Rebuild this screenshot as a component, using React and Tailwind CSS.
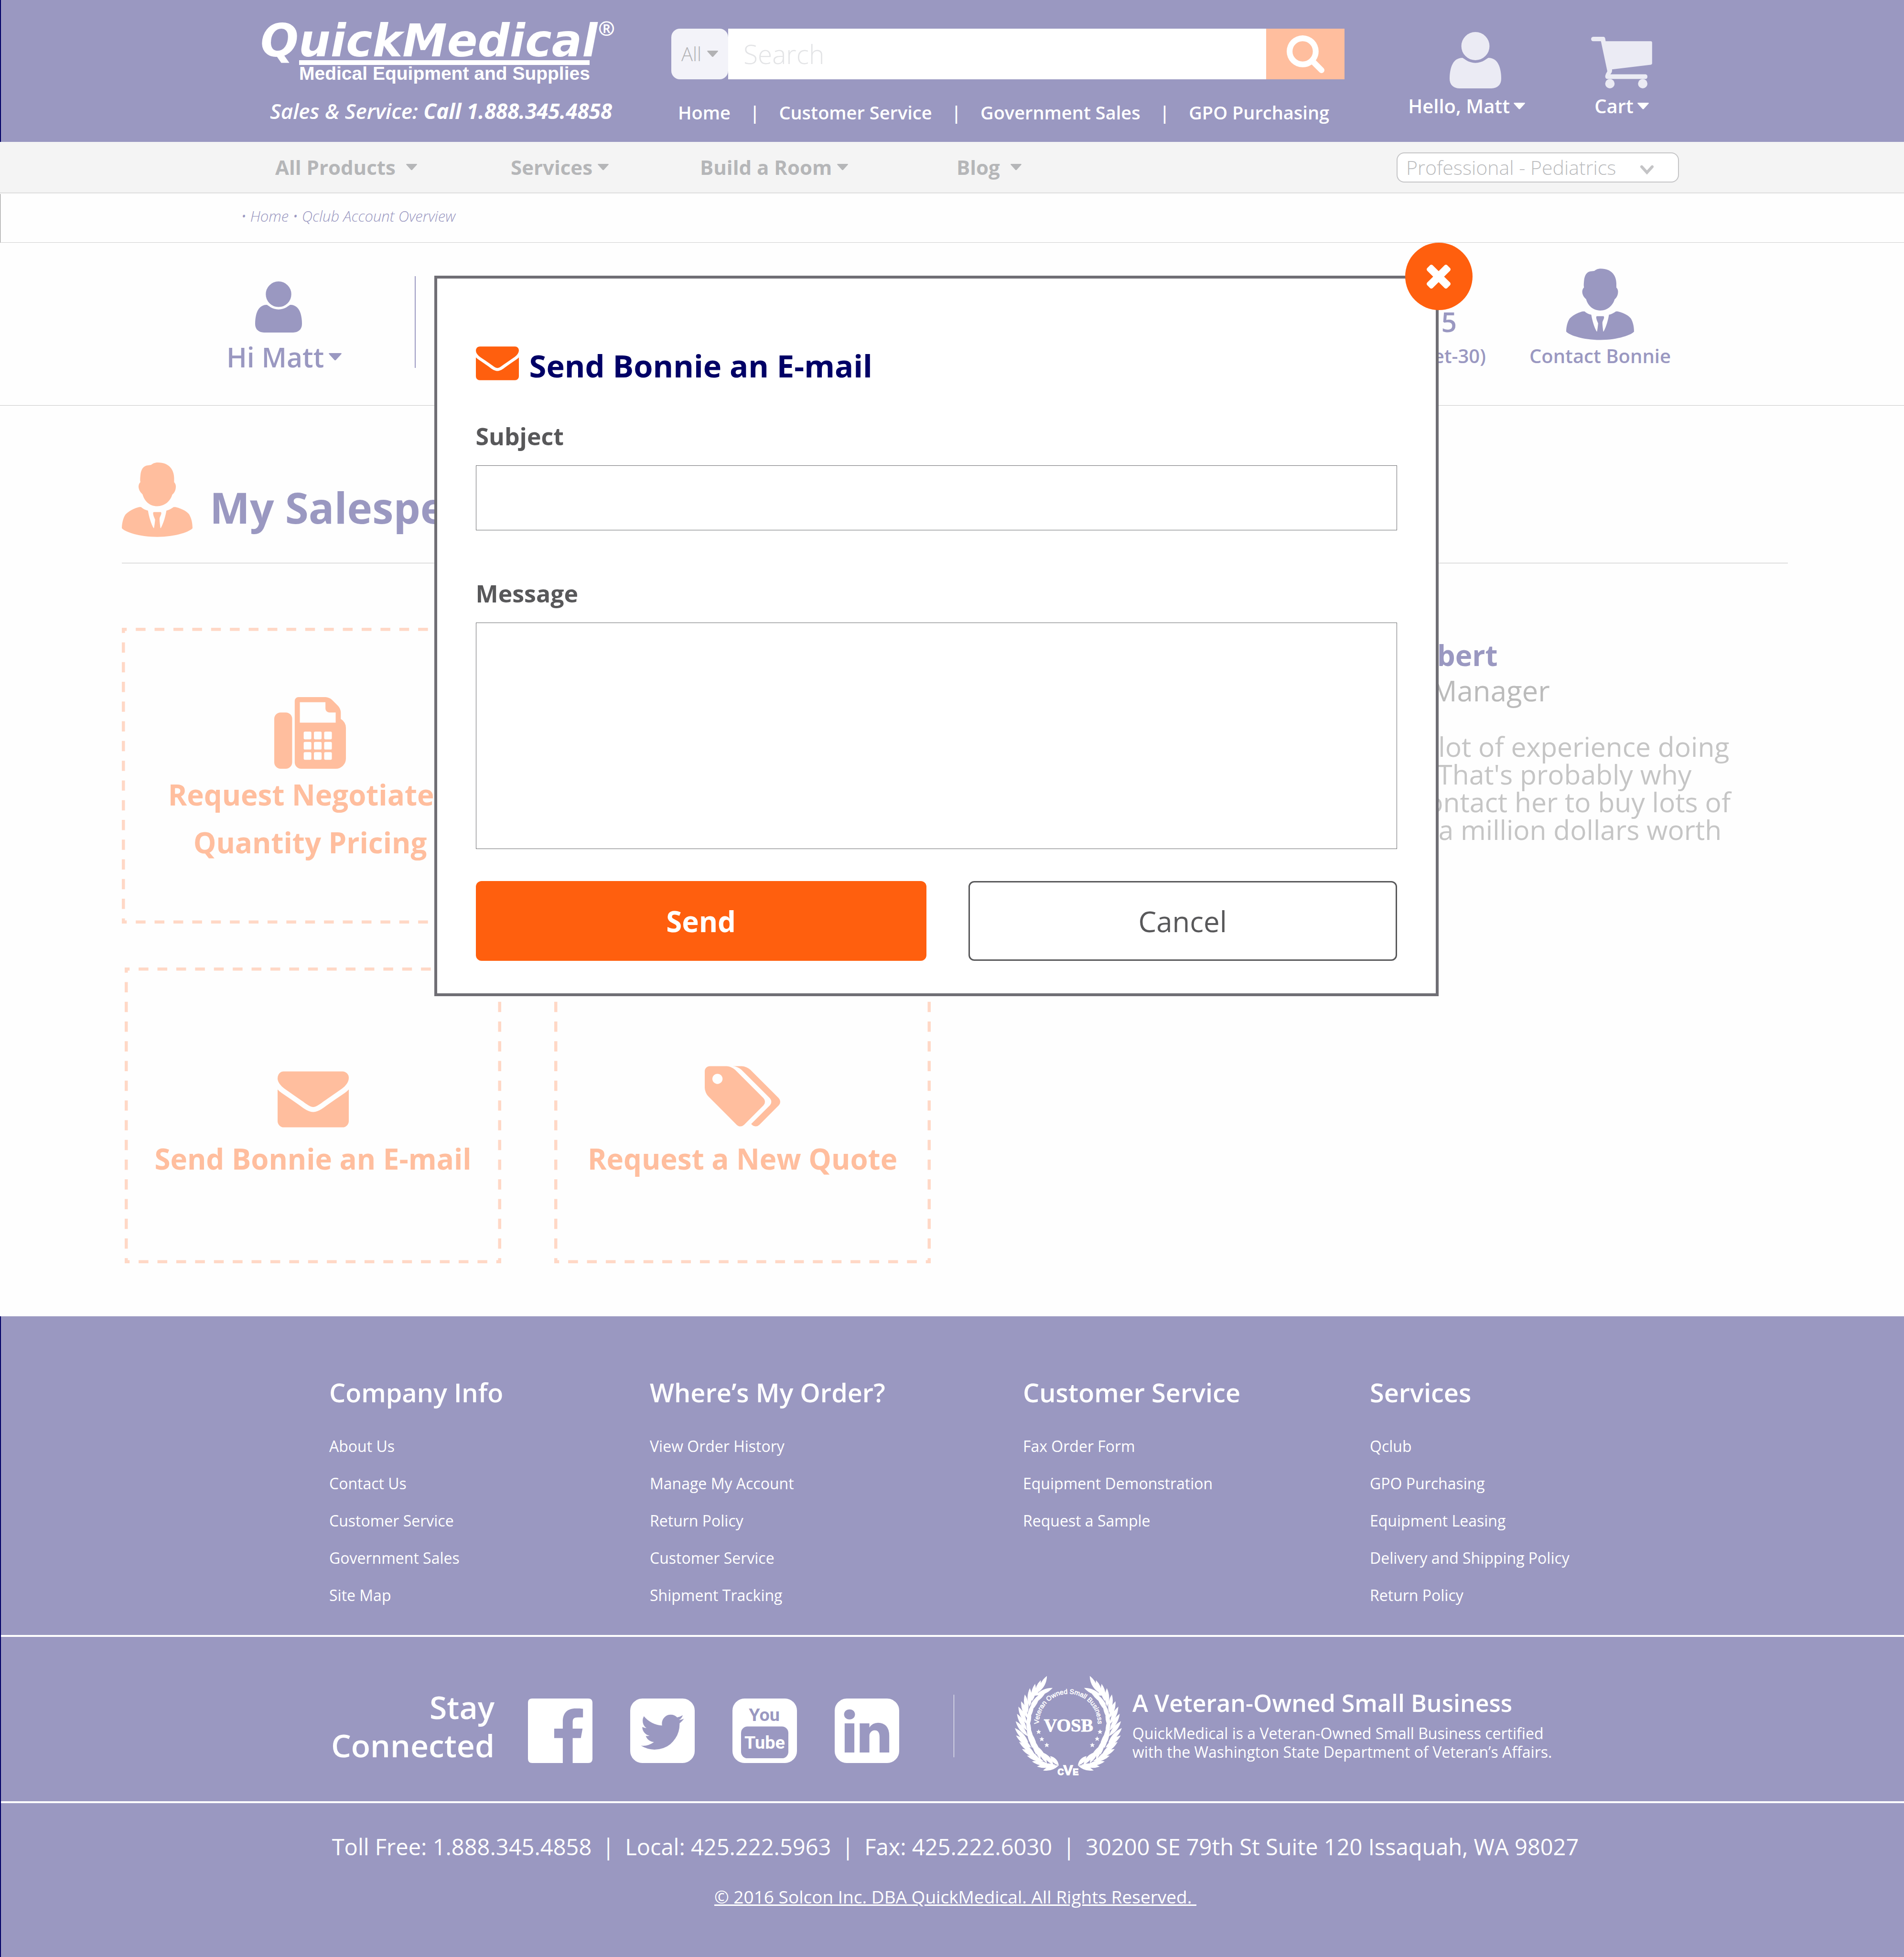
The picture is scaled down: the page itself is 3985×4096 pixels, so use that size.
import React from "react";

const PATHS = {
  search:
    "M1152 832q0-185-131.5-316.5t-316.5-131.5-316.5 131.5-131.5 316.5 131.5 316.5 316.5 131.5 316.5-131.5 131.5-316.5zm512 832q0 52-38 90t-90 38q-54 0-90-38l-343-342q-179 124-399 124-143 0-273.5-55.5t-225-150-150-225-55.5-273.5 55.5-273.5 150-225 225-150 273.5-55.5 273.5 55.5 225 150 150 225 55.5 273.5q0 220-124 399l343 343q37 37 37 90z",
  user:
    "M1600 1405q0 120-73 189.5t-194 69.5h-874q-121 0-194-69.5t-73-189.5q0-53 3.5-103.5t14-109 26.5-108.5 43-97.5 62-81 85.5-53.5 111.5-20q9 0 42 21.5t74.5 48 108 48 133.5 21.5 133.5-21.5 108-48 74.5-48 42-21.5q61 0 111.5 20t85.5 53.5 62 81 43 97.5 26.5 108.5 14 109 3.5 103.5zm-320-893q0 159-112.5 271.5t-271.5 112.5-271.5-112.5-112.5-271.5 112.5-271.5 271.5-112.5 271.5 112.5 112.5 271.5z",
  envelope:
    "M1792 710v794q0 66-47 113t-113 47h-1472q-66 0-113-47t-47-113v-794q44 49 101 87 362 246 497 345 57 42 92.5 65.5t94.5 48 110 24.5h2q51 0 110-24.5t94.5-48 92.5-65.5q170-123 498-345 57-39 100-87zm0-294q0 79-49 151t-122 123q-376 261-468 325-10 7-42.5 31t-54 38.5-52 32.5-57.5 27-50 9h-2q-23 0-50-9t-57.5-27-52-32.5-54-38.5-42.5-31q-91-64-262-182.5t-205-142.5q-62-42-117-115.5t-55-136.5q0-78 41.5-130t118.5-52h1472q65 0 112.5 47t47.500 113z",
  times:
    "M1490 1322q0 40-28 68l-136 136q-28 28-68 28t-68-28l-294-294-294 294q-28 28-68 28t-68-28l-136-136q-28-28-28-68t28-68l294-294-294-294q-28-28-28-68t28-68l136-136q28-28 68-28t68 28l294 294 294-294q28-28 68-28t68 28l136 136q28 28 28 68t-28 68l-294 294 294 294q28 28 28 68z",
  tags:
    "M448 448q0-53-37.5-90.5t-90.5-37.5-90.5 37.5-37.5 90.5 37.5 90.5 90.5 37.5 90.5-37.5 37.5-90.5zm1067 576q0 53-37 90l-491 492q-39 37-91 37-53 0-90-37l-715-716q-38-37-64.5-101t-26.5-117v-416q0-52 38-90t90-38h416q53 0 117 26.5t102 64.5l715 714q37 39 37 91zm384 0q0 53-37 90l-491 492q-39 37-91 37-36 0-59-14t-53-45l470-470q37-37 37-90 0-52-37-91l-715-714q-38-38-102-64.5t-117-26.5h224q53 0 117 26.5t102 64.5l715 714q37 39 37 91z",
  twitter:
    "M1408 610q-56 25-121 34 68-40 93-117-65 38-134 51-61-66-153-66-87 0-148.5 61.5t-61.5 148.5q0 29 5 48-129-7-242-65t-192-155q-29 50-29 106 0 114 91 175-47-1-100-26v2q0 75 50 133.5t123 72.5q-29 8-51 8-13 0-39-4 21 63 74.5 104t121.5 42q-116 90-261 90-26 0-50-3 148 94 322 94 112 0 210-35.5t168-95 120.5-137 75-162 24.5-168.5q0-18-1-27 63-45 105-109zm256-194v960q0 119-84.5 203.5t-203.5 84.5h-960q-119 0-203.5-84.5t-84.5-203.5v-960q0-119 84.5-203.5t203.5-84.5h960q119 0 203.5 84.5t84.5 203.5z",
  linkedin:
    "M365 1414h231v-694h-231v694zm246-908q-1-52-36-86t-93-34-94.5 34-36.5 86q0 51 35.5 85.5t92.5 34.5h1q59 0 95-34.5t36-85.5zm585 908h231v-398q0-154-73-233t-193-79q-136 0-209 117h2v-101h-231q3 66 0 694h231v-388q0-38 7-56 15-35 45-59.5t74-24.5q116 0 116 157v371zm468-998v960q0 119-84.5 203.5t-203.5 84.5h-960q-119 0-203.5-84.5t-84.5-203.5v-960q0-119 84.5-203.5t203.5-84.5h960q119 0 203.5 84.5t84.5 203.5z",
};

function Glyph({ d, box, className }) {
  return (
    <svg viewBox={box} className={className} fill="currentColor" aria-hidden="true">
      <path d={d} fillRule="evenodd" />
    </svg>
  );
}

const UserIcon = ({ className }) => <Glyph d={PATHS.user} box="192 128 1408 1536" className={className} />;
const EnvelopeIcon = ({ className }) => <Glyph d={PATHS.envelope} box="0 256 1792 1408" className={className} />;
const TagsIcon = ({ className }) => <Glyph d={PATHS.tags} box="0 128 1899 1516" className={className} />;

function Caret({ className = "w-6" }) {
  return (
    <svg viewBox="0 0 26 15" className={`shrink-0 ${className}`} fill="currentColor" aria-hidden="true">
      <path d="M1.5 0h23q2 0 1 2L14.500 14q-1.500 1.500-3 0L.5 2Q-.5 0 1.500 0z" />
    </svg>
  );
}

const FAX_KEYS = [864, 1120, 1376]
  .flatMap((y) =>
    [736, 992, 1248].map(
      (x) =>
        `M${x + 32} ${y}h128q32 0 32 32v128q0 32-32 32h-128q-32 0-32-32v-128q0-32 32-32z`
    )
  )
  .join("");

function FaxIcon({ className }) {
  return (
    <Glyph
      box="0 0 1792 1792"
      className={className}
      d={
        "M288 384q66 0 113 47t47 113v1088q0 66-47 113t-113 47h-128q-66 0-113-47t-47-113v-1088q0-66 47-113t113-47h128zM1664 547q58 34 93 93t35 128v768q0 106-75 181t-181 75h-864q-66 0-113-47t-47-113v-1536q0-40 28-68t68-28h672q40 0 88 20t76 48l152 152q28 28 48 76t20 88v163zM1536 640V384h-160q-40 0-68-28t-28-68V128H640v512z" +
        FAX_KEYS
      }
    />
  );
}

function CartIcon({ className }) {
  return (
    <svg viewBox="0 0 143 121" className={className} fill="currentColor" aria-hidden="true">
      <path d="M5 0H29Q32 0 33 4L34 10.500H140Q143 10.500 143 14V62Q143 65 140 65.500L49 76.500Q50 83 45 88H128Q132 89 132 93.500T128 99H39Q33 99 33 93Q33 89 38 81L23 10.500H5Q0 10 0 5.300T5 0z" />
      <circle cx="44" cy="110" r="11" />
      <circle cx="121" cy="110" r="11" />
    </svg>
  );
}

function SalespersonIcon({ className }) {
  return (
    <svg viewBox="0 0 495 522" className={className} fill="currentColor" aria-hidden="true">
      <path d="M205 17C215 8 230 0 252 0C330 0 366 50 366 110V138C376 148 379 160 378 172C377 195 368 212 353 225C340 270 300 306 248 306C195 306 158 270 145 223C128 208 118 190 117 170C117 158 121 145 130 137C126 122 129 105 130 90C134 46 152 22 183 20Z" />
      <path d="M134 312C148 324 165 333 183 337C190 380 205 430 222 459H225C229 440 231 420 233 400C228 388 220 372 219 358Q219 347 224 347H272Q277 348 276 360C273 372 265 382 264 394C264 415 268 440 270 459H273C292 425 306 375 312 337C330 333 348 322 363 312H375C430 325 462 348 473 366C488 395 494 420 495 460C480 482 380 521 248 521C120 521 20 485 0 460C0 430 8 390 25 365C45 342 90 318 122 312Z" />
    </svg>
  );
}

function FacebookIcon({ className }) {
  return (
    <Glyph
      box="0 0 150 150"
      className={className}
      d="M10 0H140Q150 0 150 10V140Q150 150 140 150H104V92H123L127 70H104V55C104 47 107 44 116 44H128V24C124 23 118 23 111 23C92 23 81 33 81 54V70H61V92H81V150H10Q0 150 0 140V10Q0 0 10 0Z"
    />
  );
}

function YoutubeIcon({ className }) {
  return (
    <svg viewBox="0 0 150 150" className={className} aria-hidden="true">
      <rect width="150" height="150" rx="28" fill="white" />
      <rect x="20" y="65" width="110" height="74" rx="15" fill="#9a98c1" />
      <g textAnchor="middle" fontSize="42" fontWeight="700" fontFamily="Roboto, 'Liberation Sans', sans-serif">
        <text x="74" y="52" fill="#9a98c1">You</text>
        <text x="75" y="117" fill="white">Tube</text>
      </g>
    </svg>
  );
}

/* Each leaf: tip x, tip y, base x, base y (left half of the wreath) */
const LEAVES = [
  [258, 730, 368, 695], [215, 703, 345, 690], [180, 667, 300, 690], [145, 627, 262, 665],
  [110, 580, 225, 640], [90, 530, 195, 610], [68, 485, 175, 570], [60, 433, 155, 535],
  [66, 385, 150, 490], [75, 333, 145, 450], [85, 283, 143, 405], [105, 245, 148, 365],
  [130, 198, 150, 325], [165, 153, 163, 285], [202, 123, 180, 245], [241, 98, 203, 210],
  [285, 68, 228, 180], [308, 630, 368, 695], [258, 605, 330, 690], [220, 563, 285, 680],
  [195, 520, 240, 655], [183, 478, 210, 620], [163, 425, 183, 575], [157, 370, 162, 530],
  [170, 315, 145, 440], [192, 258, 145, 385], [235, 210, 150, 330], [280, 175, 170, 270],
  [325, 152, 205, 205],
];

function leafPath([tx, ty, bx, by]) {
  const dx = tx - bx;
  const dy = ty - by;
  const len = Math.hypot(dx, dy);
  const nx = (-dy / len) * 30;
  const ny = (dx / len) * 30;
  const mx = (tx + bx) / 2;
  const my = (ty + by) / 2;
  return `M${bx} ${by}Q${mx + nx} ${my + ny} ${tx} ${ty}Q${mx - nx} ${my - ny} ${bx} ${by}Z`;
}

const WREATH = LEAVES.map(leafPath).join("");
const STARS = [[227, 460], [249, 511], [284, 553], [657, 460], [637, 509], [603, 553]];

function VosbSeal({ className }) {
  return (
    <svg viewBox="60 66 750 702" className={`overflow-visible ${className}`} fill="white" role="img" aria-label="VOSB seal">
      <path d={WREATH} />
      <path d={WREATH} transform="matrix(-1 0 0 1 870 0)" />
      <defs>
        <path id="seal-arc" d="M231 428A206 206 0 1 1 639 428" />
      </defs>
      <text fontSize="47" fontFamily="'Liberation Sans', Arial, sans-serif" stroke="white" strokeWidth="2">
        <textPath href="#seal-arc" startOffset="50%" textAnchor="middle">
          Veteran Owned Small Business
        </textPath>
      </text>
      <text x="436" y="458" textAnchor="middle" fontSize="128" fontWeight="700" fontFamily="'Liberation Serif', serif" stroke="white" strokeWidth="3">
        VOSB
      </text>
      {STARS.map(([x, y]) => (
        <path
          key={`${x}-${y}`}
          transform={`translate(${x} ${y})`}
          d="M0-18L5-6L17-6L8 2L12 15L0 8L-12 15L-8 2L-17-6L-5-6Z"
        />
      ))}
      <g fontFamily="'Liberation Sans', Arial, sans-serif" fontWeight="700" stroke="white" strokeWidth="5">
        <text x="381" y="763" textAnchor="middle" fontSize="60">C</text>
        <text x="433" y="763" textAnchor="middle" fontSize="100">V</text>
        <text x="486" y="763" textAnchor="middle" fontSize="60">E</text>
      </g>
    </svg>
  );
}

/* Dashed outline whose dashes meet in full corners */
function DashedFrame() {
  const across = { pathLength: 20, strokeDasharray: "0.520 0.480", strokeDashoffset: 0.26 };
  const down = { pathLength: 15, strokeDasharray: "0.520 0.480", strokeDashoffset: 0.26 };
  return (
    <svg className="absolute inset-0 h-full w-full" stroke="#ffd8c6" strokeWidth="13" aria-hidden="true">
      <line x1="0" y1="0" x2="100%" y2="0" {...across} />
      <line x1="0" y1="100%" x2="100%" y2="100%" {...across} />
      <line x1="0" y1="0" x2="0" y2="100%" {...down} />
      <line x1="100%" y1="0" x2="100%" y2="100%" {...down} />
    </svg>
  );
}

function ActionCard({ icon, iconBox, children }) {
  return (
    <a href="#" className="relative flex h-[619px] w-[788px] flex-col items-center text-center text-[60px] leading-[100px] font-bold text-[#ffbe9e]">
      <DashedFrame />
      <span className={iconBox}>{icon}</span>
      <span>{children}</span>
    </a>
  );
}

const TOP_LINKS = ["Home", "Customer Service", "Government Sales", "GPO Purchasing"];

function Header() {
  return (
    <header className="flex h-[297px] items-start border-l-2 border-[#000066] bg-[#9a98c1] pr-[527px] pl-[543px] text-white">
      <div className="w-[742px] shrink-0 pt-9">
        <a href="#" className="block whitespace-nowrap">
          <span className="flex h-[90px] items-start justify-between">
            <span className="font-['DejaVu_Sans',sans-serif] text-[94px] leading-[100px] font-bold italic">QuickMedical</span>
            <span className="text-[42px] leading-[46px] font-bold">®</span>
          </span>
          <span className="ml-[81px] block h-[10px] w-[608px] bg-white" />
          <span className="ml-[81px] block font-['Liberation_Sans',Arial,sans-serif] text-[39px] leading-9 font-bold">
            Medical Equipment and Supplies
          </span>
        </a>
        <p className="mt-[30px] ml-5 text-[44px] leading-[60px] font-semibold whitespace-nowrap italic">
          Sales &amp; Service: <span className="font-bold">Call 1.888.345.4858</span>
        </p>
      </div>

      <div className="ml-[118px] flex-1 pt-[60px]">
        <form className="flex h-[106px]">
          <button type="button" className="flex w-[119px] items-center justify-center gap-3 rounded-[18px] bg-[#f3f3f9] text-[40px] font-light text-[#b2b2b4]">
            All <Caret className="w-[23px]" />
          </button>
          <input
            type="search"
            aria-label="Search"
            placeholder="Search"
            className="min-w-0 flex-1 bg-white px-8 text-[55px] font-light text-[#58585a] placeholder:text-[#e3e4e6]"
          />
          <button type="button" aria-label="Search" className="flex w-[164px] items-center justify-center bg-[#ffbe9e]">
            <Glyph d={PATHS.search} box="0 128 1664 1664" className="h-[79px] w-[79px]" />
          </button>
        </form>
        <nav className="mt-[39px] flex items-center justify-between pr-8 pl-[14px] text-[38px] leading-[60px] font-semibold whitespace-nowrap">
          {TOP_LINKS.map((label, i) => (
            <React.Fragment key={label}>
              {i > 0 && <span>|</span>}
              <a href="#">{label}</a>
            </React.Fragment>
          ))}
        </nav>
      </div>

      <div className="ml-[133px] flex gap-[138px] pt-[67px] text-[40px] leading-[50px] font-semibold whitespace-nowrap">
        <a href="#" className="flex flex-col items-center">
          <UserIcon className="ml-9 h-[118px] w-[108px] text-[#ebebf4]" />
          <span className="mt-3 flex items-center gap-2">Hello, Matt <Caret /></span>
        </a>
        <a href="#" className="flex flex-col items-center pt-[10px]">
          <CartIcon className="h-[108px] w-[128px] text-[#ebebf4]" />
          <span className="mt-3 flex items-center gap-2">Cart <Caret /></span>
        </a>
      </div>
    </header>
  );
}

function MainNav() {
  const item = "flex items-center";
  return (
    <div className="border-b-2 border-[#f4f4f4]">
      <nav className="grid h-[107px] grid-cols-[493fr_396fr_537fr_921fr_591fr] items-center border-b border-[#d0d0d0] bg-[#f4f4f4] pr-[471px] pl-[576px] text-[42px] leading-[60px] font-bold whitespace-nowrap text-[#b5b6b8]">
        <a href="#" className={`${item} gap-[22px]`}>All Products <Caret className="w-[23px]" /></a>
        <a href="#" className={`${item} gap-[11px]`}>Services <Caret className="w-[23px]" /></a>
        <a href="#" className={`${item} gap-[11px]`}>Build a Room <Caret className="w-[23px]" /></a>
        <a href="#" className={`${item} gap-[22px]`}>Blog <Caret className="w-[23px]" /></a>
        <div className="relative">
          <select
            aria-label="Shop profile"
            className="h-[63px] w-full appearance-none rounded-[16px] border-2 border-[#c4c4c6] bg-white pl-[18px] text-[41px] leading-[56px] font-light text-[#bbbcbe]"
          >
            <option>Professional - Pediatrics</option>
          </select>
          <svg viewBox="0 0 28 20" className="pointer-events-none absolute top-[27px] right-[53px] w-7" fill="none" stroke="#c4c4c6" strokeWidth="6" aria-hidden="true">
            <path d="M3 3L14 15L25 3" strokeLinecap="round" />
          </svg>
        </div>
      </nav>
    </div>
  );
}

function AccountBar() {
  return (
    <section className="flex h-[341px] items-end border-b border-[#c8c8c8] pr-[488px] pb-[78px] pl-[474px] font-semibold whitespace-nowrap text-[#9a98c1]">
      <a href="#" className="flex flex-col items-center">
        <UserIcon className="mr-6 h-[107px] w-[98px]" />
        <span className="mt-7 flex items-center gap-[10px] text-[57px] leading-[46px]">
          Hi Matt <Caret className="w-[27px]" />
        </span>
      </a>
      <span className="ml-[153px] h-[192px] w-[2px] bg-[#9a98c1]" />
      <div className="mr-[91px] ml-auto flex flex-col items-center gap-3">
        <span className="text-[57px] leading-[70px]">5</span>
        <span className="text-[40px] leading-[50px]">(Net-30)</span>
      </div>
      <a href="#" className="flex flex-col items-center">
        <SalespersonIcon className="h-[150px] w-[142px]" />
        <span className="mt-2 text-[40px] leading-[50px]">Contact Bonnie</span>
      </a>
    </section>
  );
}

function Salesperson() {
  return (
    <main className="pt-[119px] pr-[243px] pb-[111px] pl-[255px]">
      <div className="flex items-end gap-9 border-b border-[#c0c0c0] pb-[54px]">
        <SalespersonIcon className="h-[156px] w-[148px] text-[#ffbe9e]" />
        <h1 className="pb-3 text-[89px] leading-[100px] font-bold text-[#9a98c1]">My Salesperson</h1>
      </div>
      <div className="mt-[135px] flex items-start justify-between">
        <div>
          <ActionCard iconBox="mt-[145px] mb-1" icon={<FaxIcon className="h-[150px] w-[150px]" />}>
            Request Negotiated
            <br />
            Quantity Pricing
          </ActionCard>
          <div className="mt-[92px] ml-[6px] flex gap-[111px]">
            <ActionCard iconBox="flex h-[350px] items-end pb-[15px]" icon={<EnvelopeIcon className="h-[118px] w-[149px]" />}>
              Send Bonnie an E-mail
            </ActionCard>
            <ActionCard iconBox="flex h-[350px] items-end pb-[17px]" icon={<TagsIcon className="h-[127px] w-[158px]" />}>
              Request a New Quote
            </ActionCard>
          </div>
        </div>
        <aside className="w-[1089px] pt-[21px] whitespace-nowrap">
          <h2 className="text-[60px] leading-[72px] font-bold text-[#9a98c1]">Bonnie Lambert</h2>
          <p className="text-[60px] leading-[76px] text-[#bbbbbb]">Inside Sales Manager</p>
          <p className="mt-[50px] text-[57px] leading-[58px] text-[#c5c5c5]">
            Bonnie has a lot of experience doing
            <br />
            many things. That's probably why
            <br />
            people can contact her to buy lots of
            <br />
            stuff, at least a million dollars worth
          </p>
        </aside>
      </div>
    </main>
  );
}

function EmailDialog() {
  const label = "block text-[50px] leading-[60px] font-bold";
  const field = "block w-full resize-none border border-[#6d6e71] bg-white px-6 text-[50px]";
  return (
    <div
      role="dialog"
      aria-labelledby="dialog-title"
      className="absolute top-[577px] right-[24.45%] left-[22.8%] border-6 border-[#6f6e74] bg-white px-[81px] pt-[142px] pb-[68px] text-[#58585a]"
    >
      <button
        type="button"
        aria-label="Close"
        className="absolute -top-[75px] -right-[77px] flex h-[141px] w-[141px] items-center justify-center rounded-full bg-[#ff5f0e] text-white"
      >
        <Glyph d={PATHS.times} box="302 366 1188 1188" className="h-[50px] w-[50px]" />
      </button>
      <div className="flex items-start gap-[22px]">
        <EnvelopeIcon className="h-[71px] w-[90px] text-[#ff5f0e]" />
        <h2 id="dialog-title" className="text-[65px] leading-[80px] font-bold text-[#000066]">Send Bonnie an E-mail</h2>
      </div>
      <form>
        <label htmlFor="subject" className={`mt-[78px] ${label}`}>Subject</label>
        <input id="subject" type="text" className={`mt-[31px] h-[136px] ${field}`} />
        <label htmlFor="message" className={`mt-[102px] ${label}`}>Message</label>
        <textarea id="message" className={`mt-[31px] h-[474px] ${field}`} />
        <div className="mt-[67px] grid grid-cols-[943fr_897fr] gap-[88px] text-[60px] leading-[80px]">
          <button type="button" className="h-[167px] rounded-[12px] bg-[#ff5f0e] font-bold text-white">Send</button>
          <button type="button" className="h-[167px] rounded-[12px] border-3 border-[#58585a] bg-white">Cancel</button>
        </div>
      </form>
    </div>
  );
}

const FOOTER_COLUMNS = [
  ["Company Info", ["About Us", "Contact Us", "Customer Service", "Government Sales", "Site Map"]],
  ["Where’s My Order?", ["View Order History", "Manage My Account", "Return Policy", "Customer Service", "Shipment Tracking"]],
  ["Customer Service", ["Fax Order Form", "Equipment Demonstration", "Request a Sample"]],
  ["Services", ["Qclub", "GPO Purchasing", "Equipment Leasing", "Delivery and Shipping Policy", "Return Policy"]],
];

const CONTACTS = [
  "Toll Free: 1.888.345.4858",
  "Local: 425.222.5963",
  "Fax: 425.222.6030",
  "30200 SE 79th St Suite 120 Issaquah, WA 98027",
];

function Footer() {
  const social = "h-[135px] w-[135px]";
  return (
    <footer className="border-l-2 border-[#000066] bg-[#9a98c1] whitespace-nowrap text-white">
      <div className="grid grid-cols-[671fr_781fr_726fr_648fr] pt-[124px] pr-[470px] pb-[44px] pl-[687px]">
        {FOOTER_COLUMNS.map(([title, links]) => (
          <div key={title}>
            <h3 className="text-[54px] leading-[70px] font-semibold">{title}</h3>
            <ul className="mt-[39px] text-[32px] leading-[78px]">
              {links.map((link) => (
                <li key={link}><a href="#">{link}</a></li>
              ))}
            </ul>
          </div>
        ))}
      </div>

      <div className="flex items-center border-y-4 border-white pt-[81px] pb-[53px] pl-[687px]">
        <p className="w-[346px] text-right text-[66px] leading-[80px] font-semibold">
          Stay
          <br />
          Connected
        </p>
        <div className="mt-5 ml-[70px] flex gap-[79px]">
          <a href="#" aria-label="Facebook"><FacebookIcon className={social} /></a>
          <a href="#" aria-label="Twitter"><Glyph d={PATHS.twitter} box="128 128 1536 1536" className={social} /></a>
          <a href="#" aria-label="YouTube"><YoutubeIcon className={social} /></a>
          <a href="#" aria-label="LinkedIn"><Glyph d={PATHS.linkedin} box="128 128 1536 1536" className={social} /></a>
        </div>
        <span className="ml-[114px] h-[131px] w-px bg-white" />
        <VosbSeal className="ml-[127px] h-[210px] w-[224px]" />
        <div className="mb-1 ml-[22px]">
          <h3 className="text-[50px] leading-[60px] font-semibold">A Veteran-Owned Small Business</h3>
          <p className="mt-[14px] text-[32px] leading-[39px]">
            QuickMedical is a Veteran-Owned Small Business certified
            <br />
            with the Washington State Department of Veteran’s Affairs.
          </p>
        </div>
      </div>

      <div className="flex flex-col items-center pt-[61px] pb-[96px] pl-3">
        <div className="flex items-center gap-[22px] text-[47px] leading-[60px]">
          {CONTACTS.map((text, i) => (
            <React.Fragment key={text}>
              {i > 0 && <span>|</span>}
              <span>{text}</span>
            </React.Fragment>
          ))}
        </div>
        <a href="#" className="mt-[45px] text-[37px] leading-[60px] underline">
          © 2016 Solcon Inc. DBA QuickMedical. All Rights Reserved.&nbsp;
        </a>
      </div>
    </footer>
  );
}

export default function App() {
  return (
    <div className="relative w-full overflow-hidden bg-[#fefefe] font-['Open_Sans','Noto_Sans',sans-serif]">
      <Header />
      <MainNav />
      <div className="flex h-[102px] items-start gap-2 border-b border-l border-b-[#d0d0d0] border-l-[#888888] pt-[22px] pl-[503px] text-[31px] leading-[48px] font-light text-[#9a98c1] italic">
        <span>•</span>
        <a href="#">Home</a>
        <span>•</span>
        <a href="#">Qclub Account Overview</a>
      </div>
      <AccountBar />
      <Salesperson />
      <Footer />
      <EmailDialog />
    </div>
  );
}
